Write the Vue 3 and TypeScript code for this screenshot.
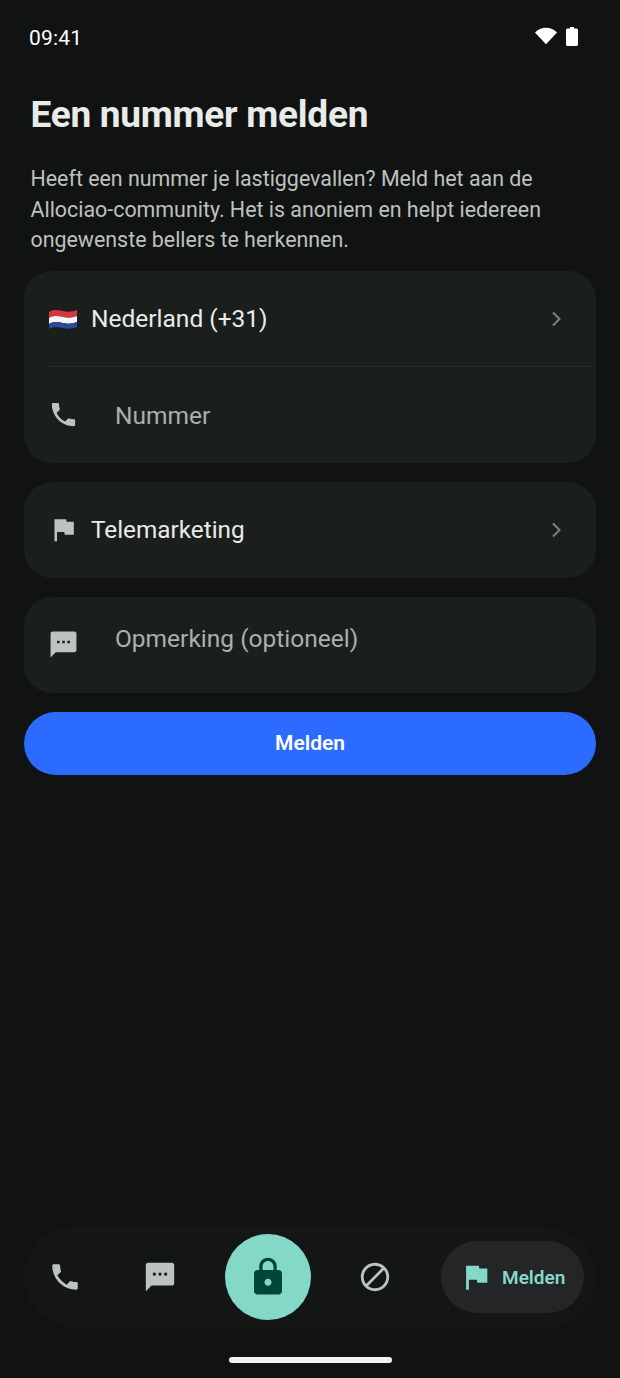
<script setup lang="ts">
const intro = 'Heeft een nummer je lastiggevallen? Meld het aan de Allociao-community. Het is anoniem en helpt iedereen ongewenste bellers te herkennen.';

const phonePath = 'M6.6 10.8c1.4 2.8 3.8 5.1 6.6 6.6l2.2-2.2c.3-.3.7-.4 1-.2 1.1.4 2.3.6 3.6.6.6 0 1 .4 1 1V20c0 .6-.4 1-1 1C10.6 21 3 13.4 3 4c0-.6.4-1 1-1h3.5c.6 0 1 .4 1 1 0 1.3.2 2.5.6 3.6.1.3 0 .7-.2 1l-2.3 2.2z';
const flagPath = 'M14.4 6 14 4H5v17h2v-7h5.6l.4 2h7V6z';
const chatPath = 'M20.500 2h-17C2.700 2 2 2.700 2 3.500V22l4-4h14.500c.8 0 1.500-.7 1.500-1.500v-13C22 2.700 21.300 2 20.500 2zM9 11H7V9h2v2zm4 0h-2V9h2v2zm4 0h-2V9h2v2z';
</script>

<template>
  <div class="screen">
    <div class="status-bar">
      <span class="time">09:41</span>
      <div class="status-icons">
        <svg class="wifi" viewBox="0 0 24 18"><path d="M12 18 0 5.200C3.200 2 7.400 0 12 0s8.800 2 12 5.200z" /></svg>
        <svg class="battery" viewBox="0 0 12 19"><path d="M4 0h4v1.500h2.500c.8 0 1.500.7 1.500 1.500v14.500c0 .8-.7 1.500-1.500 1.500h-9C.7 19 0 18.300 0 17.500V3c0-.8.7-1.500 1.500-1.500H4z" /></svg>
      </div>
    </div>

    <main class="content">
      <h1>Een nummer melden</h1>
      <p class="intro">{{ intro }}</p>

      <section class="card">
        <div class="row">
          <svg class="flag" viewBox="0 0 30 22">
            <path fill="#d8343c" d="M1 4c5-3 9-2 14-1s9 1 14-1v6c-5 2-9 2-14 1S6 7 1 10z" />
            <path fill="#f4f4f4" d="M1 10c5-3 9-2 14-1s9 1 14-1v6c-5 2-9 2-14 1s-9-2-14 1z" />
            <path fill="#2c4a9c" d="M1 16c5-3 9-2 14-1s9 1 14-1v5c-5 2-9 2-14 1s-9-2-14 1z" />
          </svg>
          <span class="value country">Nederland (+31)</span>
          <svg class="chevron" viewBox="0 0 24 24"><path d="M9 5.500 15.500 12 9 18.500" /></svg>
        </div>
        <div class="divider"></div>
        <div class="row">
          <svg class="icon field-icon" viewBox="0 0 24 24"><path :d="phonePath" /></svg>
          <span class="placeholder number">Nummer</span>
        </div>
      </section>

      <section class="card">
        <div class="row">
          <svg class="icon field-icon" viewBox="0 0 24 24"><path :d="flagPath" /></svg>
          <span class="value reason">Telemarketing</span>
          <svg class="chevron" viewBox="0 0 24 24"><path d="M9 5.500 15.500 12 9 18.500" /></svg>
        </div>
      </section>

      <section class="card">
        <div class="row note">
          <svg class="icon field-icon note-icon" viewBox="0 0 24 24"><path :d="chatPath" /></svg>
          <span class="placeholder">Opmerking (optioneel)</span>
        </div>
      </section>

      <button class="submit" type="button">Melden</button>
    </main>

    <nav class="tabs">
      <div class="tab">
        <svg class="icon tab-icon" viewBox="0 0 24 24"><path :d="phonePath" /></svg>
      </div>
      <div class="tab">
        <svg class="icon tab-icon" viewBox="0 0 24 24"><path :d="chatPath" /></svg>
      </div>
      <div class="lock">
        <svg viewBox="0 0 24 24"><path d="M18 8h-1V6c0-2.800-2.200-5-5-5S7 3.200 7 6v2H6c-1.100 0-2 .9-2 2v10c0 1.100.9 2 2 2h12c1.100 0 2-.9 2-2V10c0-1.100-.9-2-2-2zm-6 9c-1.100 0-2-.9-2-2s.9-2 2-2 2 .9 2 2-.9 2-2 2zm3.100-9H8.900V6c0-1.700 1.400-3.100 3.100-3.100s3.100 1.400 3.100 3.100v2z" /></svg>
      </div>
      <div class="tab">
        <svg class="icon tab-icon" viewBox="0 0 24 24"><path d="M12 2C6.500 2 2 6.500 2 12s4.500 10 10 10 10-4.500 10-10S17.500 2 12 2zM4 12c0-4.400 3.600-8 8-8 1.800 0 3.500.6 4.900 1.700L5.700 16.900C4.600 15.500 4 13.800 4 12zm8 8c-1.800 0-3.500-.6-4.900-1.700L18.300 7.100C19.400 8.500 20 10.200 20 12c0 4.400-3.600 8-8 8z" /></svg>
      </div>
      <div class="tab-active">
        <svg viewBox="0 0 24 24"><path :d="flagPath" /></svg>
        <span>Melden</span>
      </div>
    </nav>

    <div class="home-bar"></div>
  </div>
</template>

<style>
html,
body {
  margin: 0;
  background: #111313;
}
</style>

<style scoped>
.screen {
  width: 620px;
  height: 1378px;
  overflow: hidden;
  display: flex;
  flex-direction: column;
  background: #111313;
  font-family: Roboto, "Liberation Sans", sans-serif;
}

.status-bar {
  height: 76px;
  box-sizing: border-box;
  padding: 0 42px 0 29px;
  display: flex;
  align-items: center;
  justify-content: space-between;
  color: #fff;
}

.time {
  font-size: 21px;
  letter-spacing: 0.2px;
}

.status-icons {
  display: flex;
  align-items: center;
  gap: 9px;
  margin-top: -4px;
}

.wifi {
  width: 22px;
  height: 18px;
  fill: #fff;
}

.battery {
  width: 12px;
  height: 19px;
  fill: #fff;
}

.content {
  padding: 0 24px;
  display: flex;
  flex-direction: column;
}

h1 {
  margin: 17px 0 0 6.500px;
  font-size: 37px;
  line-height: 44px;
  font-weight: 700;
  color: #e9ebe9;
  letter-spacing: -0.260px;
}

.intro {
  margin: 27px 0 15px 6.500px;
  width: 540px;
  font-size: 21.400px;
  line-height: 30.500px;
  color: #bcc2bf;
}

.card {
  background: #1a1f1e;
  border-radius: 28px;
  margin-bottom: 19px;
}

.row {
  height: 96px;
  display: flex;
  align-items: center;
  padding: 0 24px;
}

.divider {
  height: 1px;
  margin: -1px 0 0 24px;
  background: #252a29;
}

.flag {
  width: 30px;
  height: 22px;
  flex: none;
}

.value {
  font-size: 24.500px;
  color: #e9ebe9;
}

.country {
  margin-left: 13px;
}

.reason {
  margin-left: 12px;
  font-size: 24.300px;
}

.chevron {
  width: 24px;
  height: 24px;
  margin-left: auto;
  margin-right: 4px;
  fill: none;
  stroke: #7b8280;
  stroke-width: 2;
}

.icon {
  fill: #bcc4c1;
}

.field-icon {
  width: 31px;
  height: 31px;
  flex: none;
}

.placeholder {
  font-size: 24.500px;
  color: #a9b0ad;
  margin-left: 36px;
}

.number {
  padding-top: 1px;
}

.note {
  align-items: flex-start;
  padding-top: 27px;
  height: 69px;
}

.note-icon {
  margin-top: 5px;
}

.submit {
  height: 63px;
  border: 0;
  border-radius: 32px;
  background: #2b6bff;
  color: #fff;
  font-family: inherit;
  font-size: 21px;
  font-weight: 600;
}

.tabs {
  margin: auto 24px 0;
  height: 102px;
  flex: none;
  box-sizing: border-box;
  padding: 0 12px 0 0;
  display: flex;
  align-items: center;
  border-radius: 51px;
  background: #141616;
}

.tab {
  width: 34px;
  height: 34px;
  display: flex;
}

.tab:nth-child(1) {
  margin-left: 24px;
}

.tab:nth-child(2) {
  margin-left: 61px;
}

.tab:nth-child(4) {
  margin-left: 47px;
}

.tab-icon {
  width: 34px;
  height: 34px;
}

.lock {
  width: 86px;
  height: 86px;
  margin-left: 48px;
  border-radius: 50%;
  background: #83d8c8;
  display: flex;
  align-items: center;
  justify-content: center;
}

.lock svg {
  width: 42px;
  height: 42px;
  fill: #02453b;
}

.tab-active {
  margin-left: auto;
  width: 143px;
  height: 72px;
  box-sizing: border-box;
  padding-left: 18px;
  display: flex;
  align-items: center;
  gap: 9px;
  border-radius: 36px;
  background: #232527;
  color: #83d8c8;
  font-size: 19px;
  font-weight: 600;
}

.tab-active svg {
  width: 34px;
  height: 34px;
  fill: #83d8c8;
}

.home-bar {
  flex: none;
  width: 163px;
  height: 6px;
  margin: 29px auto 15px;
  border-radius: 3px;
  background: #f4f4f4;
}
</style>
